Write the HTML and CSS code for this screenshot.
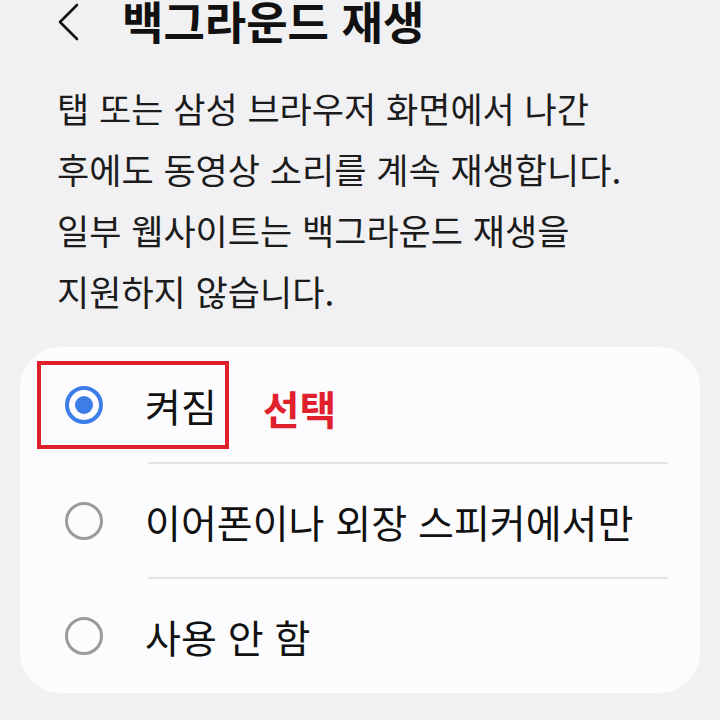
FILE: index.html
```html
<!DOCTYPE html>
<html lang="ko">
<head>
<meta charset="utf-8">
<link rel="stylesheet" href="styles.css">
</head>
<body>
<div class="page">
  <header class="header">
    <svg class="back" width="24" height="40" viewBox="0 0 24 40"><path d="M19 3 L2 20 L19 37" fill="none" stroke="#111" stroke-width="2.6" stroke-linecap="round" stroke-linejoin="round"/></svg>
    <h1 class="title">백그라운드 재생</h1>
  </header>
  <p class="desc">탭 또는 삼성 브라우저 화면에서 나간<br>후에도 동영상 소리를 계속 재생합니다.<br>일부 웹사이트는 백그라운드 재생을<br>지원하지 않습니다.</p>
  <div class="card">
    <div class="row">
      <span class="radio on"><span class="dot"></span></span>
      <span class="label">켜짐</span>
      <span class="note">선택</span>
      <span class="mark"></span>
    </div>
    <div class="divider"></div>
    <div class="row">
      <span class="radio"></span>
      <span class="label">이어폰이나 외장 스피커에서만</span>
    </div>
    <div class="divider"></div>
    <div class="row">
      <span class="radio"></span>
      <span class="label">사용 안 함</span>
    </div>
  </div>
</div>
</body>
</html>
```

FILE: styles.css
```css
html, body {
  margin: 0;
  padding: 0;
  background: #f1f1f3;
}
body {
  width: 720px;
  height: 720px;
  overflow: hidden;
  font-family: "Noto Sans CJK KR", "Noto Sans", sans-serif;
  color: #111;
}
.page {
  display: flex;
  flex-direction: column;
}
.header {
  display: flex;
  align-items: center;
  height: 46px;
  padding-left: 58px;
}
.back {
  display: block;
  flex: none;
  margin-top: -2px;
}
.title {
  margin: -4px 0 0 40px;
  font-size: 45px;
  font-weight: 700;
  line-height: 50px;
  letter-spacing: 0;
  color: #111;
}
.desc {
  margin: 31px 0 0 57px;
  font-size: 35px;
  line-height: 61px;
  color: #1c1c1c;
  white-space: nowrap;
}
.card {
  position: relative;
  margin: 26px 0 0 20px;
  width: 680px;
  height: 346px;
  background: #fcfcfe;
  border-radius: 40px;
  display: flex;
  flex-direction: column;
}
.row {
  position: relative;
  display: flex;
  align-items: center;
  height: 115px;
  padding-left: 45px;
}
.radio {
  flex: none;
  width: 38px;
  height: 38px;
  box-sizing: border-box;
  border: 3px solid #9b9b9b;
  border-radius: 50%;
  display: flex;
  align-items: center;
  justify-content: center;
}
.radio.on {
  border: 4px solid #3d7de6;
}
.dot {
  width: 18px;
  height: 18px;
  border-radius: 50%;
  background: #3d7de6;
}
.label {
  margin-left: 42px;
  font-size: 39px;
  line-height: 44px;
  color: #111;
  white-space: nowrap;
}
.note {
  margin-left: 46px;
  font-size: 40px;
  font-weight: 700;
  line-height: 44px;
  color: #e0202c;
  margin-top: 6px;
}
.mark {
  position: absolute;
  left: 17px;
  top: 14px;
  width: 192px;
  height: 88px;
  box-sizing: border-box;
  border: 4px solid #e01f2b;
}
.divider {
  height: 2px;
  margin: 0 32px 0 128px;
  background: #e3e3e5;
}
.row + .divider + .row {
  height: 113px;
}
```
